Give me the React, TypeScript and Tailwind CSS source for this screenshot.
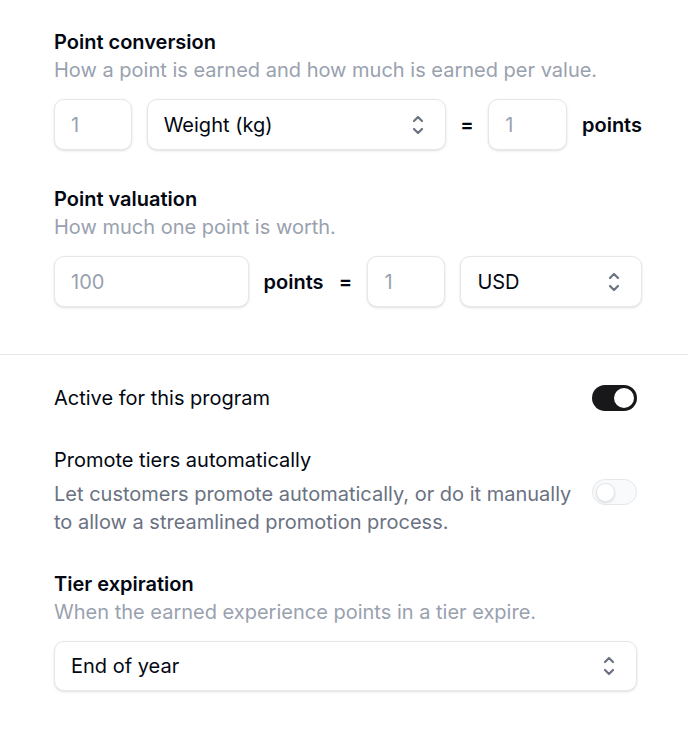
import React from "react";

function UpDown() {
  return (
    <svg width="14" height="22" viewBox="0 0 14 22" fill="none" className="text-gray-500 shrink-0">
      <path d="M3 7l4-4 4 4" stroke="currentColor" strokeWidth="2.2" strokeLinecap="round" strokeLinejoin="round" />
      <path d="M3 15l4 4 4-4" stroke="currentColor" strokeWidth="2.2" strokeLinecap="round" strokeLinejoin="round" />
    </svg>
  );
}

function Field({ value, className = "" }: { value: string; className?: string }) {
  return (
    <div className={`h-[51px] rounded-[10px] border border-gray-200 bg-white shadow-sm flex items-center px-4 text-[20px] text-gray-400 ${className}`}>
      {value}
    </div>
  );
}

function Select({ value, className = "" }: { value: string; className?: string }) {
  return (
    <div className={`h-[51px] rounded-[10px] border border-gray-200 bg-white shadow-sm flex items-center justify-between pl-4 pr-5 text-[20px] text-gray-950 ${className}`}>
      <span>{value}</span>
      <UpDown />
    </div>
  );
}

function Toggle({ on }: { on: boolean }) {
  return (
    <div
      className={`w-[45px] h-[26px] rounded-full p-[3px] flex items-center shrink-0 ${
        on ? "bg-zinc-900 justify-end" : "bg-gray-50 border border-gray-200 justify-start"
      }`}
    >
      <div className={`rounded-full bg-white ${on ? "w-[20px] h-[20px]" : "w-[19px] h-[19px] border border-gray-200 shadow-sm"}`} />
    </div>
  );
}

export default function App() {
  return (
    <div className="w-[688px] h-[736px] bg-white font-['Inter',sans-serif] text-gray-950">
      {/* Points */}
      <div className="pt-[28px] pl-[54px] pr-[46px]">
        <h3 className="text-[20px] leading-[28px] font-semibold">Point conversion</h3>
        <p className="text-[20px] leading-[28px] text-gray-400">How a point is earned and how much is earned per value.</p>
        <div className="mt-[15px] flex items-center">
          <Field value="1" className="w-[78px]" />
          <Select value="Weight (kg)" className="w-[301px] ml-[15px]" />
          <span className="w-[43px] text-center text-[20px] font-semibold">=</span>
          <Field value="1" className="w-[79px]" />
          <span className="ml-[15px] text-[20px] font-semibold">points</span>
        </div>

        <h3 className="mt-[35px] text-[20px] leading-[28px] font-semibold">Point valuation</h3>
        <p className="text-[20px] leading-[28px] text-gray-400">How much one point is worth.</p>
        <div className="mt-[15px] flex items-center">
          <Field value="100" className="w-[195px]" />
          <span className="ml-[15px] text-[20px] font-semibold">points</span>
          <span className="w-[44px] text-center text-[20px] font-semibold">=</span>
          <Field value="1" className="w-[78px]" />
          <Select value="USD" className="w-[182px] ml-[15px]" />
        </div>
      </div>

      <div className="mt-[47px] border-t border-gray-200" />

      {/* Tiers */}
      <div className="pt-[29px] pl-[54px] pr-[51px]">
        <div className="flex items-center justify-between">
          <span className="text-[20px] leading-[28px]">Active for this program</span>
          <Toggle on />
        </div>

        <div className="mt-[34px] flex items-start justify-between">
          <div className="w-[525px]">
            <h3 className="text-[20px] leading-[28px]">Promote tiers automatically</h3>
            <p className="mt-[6px] text-[20px] leading-[28px] text-gray-500">
              Let customers promote automatically, or do it manually to allow a streamlined promotion process.
            </p>
          </div>
          <div className="mt-[33px]">
            <Toggle on={false} />
          </div>
        </div>

        <h3 className="mt-[34px] text-[20px] leading-[28px] font-semibold">Tier expiration</h3>
        <p className="text-[20px] leading-[28px] text-gray-400">When the earned experience points in a tier expire.</p>
        <Select value="End of year" className="mt-[15px] w-full !h-[50px]" />
      </div>
    </div>
  );
}
